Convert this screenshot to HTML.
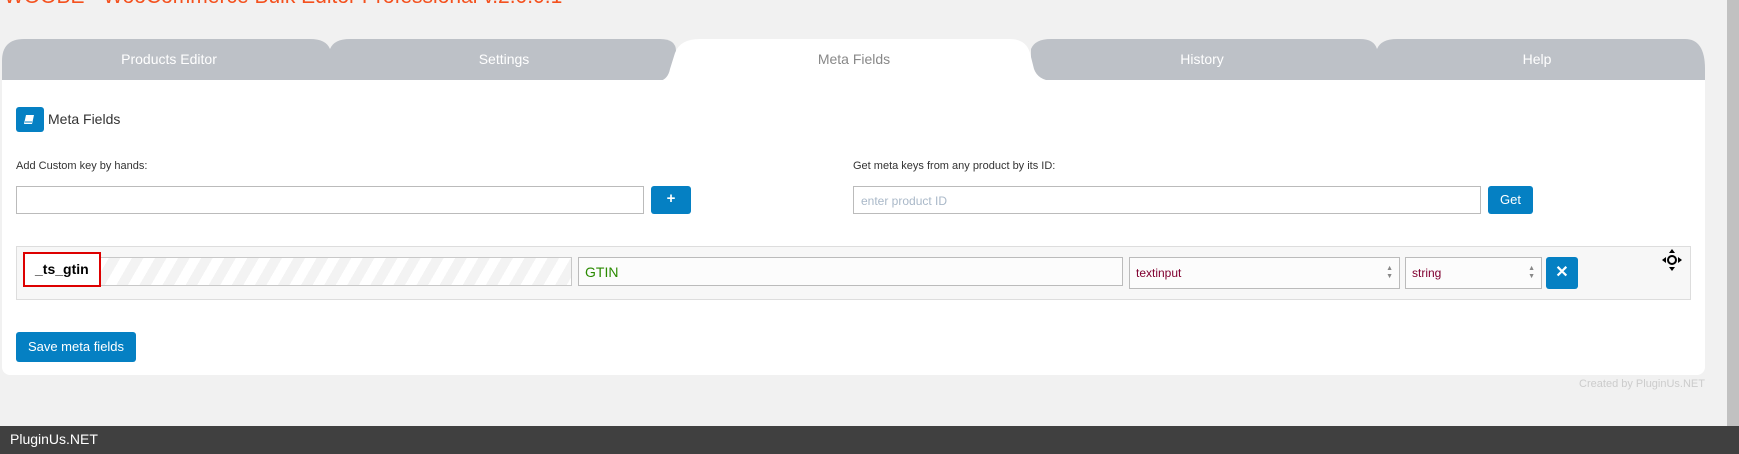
<!DOCTYPE html>
<html><head><meta charset="utf-8"><style>
*{margin:0;padding:0;box-sizing:border-box}
body{width:1739px;height:454px;background:#f1f1f1;font-family:"Liberation Sans",sans-serif;position:relative;overflow:hidden}
.a{position:absolute}
.title{left:4px;top:-15px;font-size:21px;color:#f4511e;white-space:nowrap}
.tt{font-size:14px;color:#fff;top:51px;transform:translateX(-50%);white-space:nowrap}
.panel{left:2px;top:80px;width:1703px;height:295px;background:#fff;border-radius:0 0 8px 8px}
.lbl{font-size:11px;color:#333}
.inp{background:#fff;border:1px solid #bbb}
.btn{background:#0580c3;border-radius:3px;color:#fff;text-align:center}
</style></head><body>
<div class="a title">WOOBE - WooCommerce Bulk Editor Professional v.2.0.0.1</div>
<svg class="a" style="left:0;top:39px" width="1739" height="42">
<path d="M2 41 V22 Q2 0 24 0 H310 Q326 0 330 10 V41Z" fill="#bdc1c7"/>
<path d="M330 41 V10 Q334 0 350 0 H660 Q676 0 676 12 V41Z" fill="#bdc1c7"/>
<path d="M1031 41 V10 Q1035 0 1051 0 H1360 Q1374 0 1377 10 V41Z" fill="#bdc1c7"/>
<path d="M1377 41 V10 Q1381 0 1397 0 H1685 Q1705 0 1705 30 V41Z" fill="#bdc1c7"/>
<path d="M660 42 Q668 40 670 30 L675 14 Q680 0 700 0 H1010 Q1026 0 1030 14 L1034 30 Q1038 41 1052 42Z" fill="#fff"/>
</svg>
<div class="a tt" style="left:169px">Products Editor</div>
<div class="a tt" style="left:504px">Settings</div>
<div class="a tt" style="left:854px;color:#888">Meta Fields</div>
<div class="a tt" style="left:1202px">History</div>
<div class="a tt" style="left:1537px">Help</div>
<div class="a panel"></div>
<div class="a btn" style="left:16px;top:107px;width:28px;height:25px"><svg width="28" height="25"><path d="M10 8 H18 L16 17 H8Z" fill="#fff"/><path d="M9 15 H16" stroke="#0580c3" stroke-width="1"/></svg></div>
<div class="a" style="left:48px;top:111px;font-size:14px;color:#333">Meta Fields</div>
<div class="a lbl" style="left:16px;top:160px">Add Custom key by hands:</div>
<div class="a lbl" style="left:853px;top:160px">Get meta keys from any product by its ID:</div>
<div class="a inp" style="left:16px;top:186px;width:628px;height:28px"></div>
<div class="a btn" style="left:651px;top:186px;width:40px;height:28px;font-size:15px;font-weight:bold;line-height:26px">+</div>
<div class="a inp" style="left:853px;top:186px;width:628px;height:28px;font-size:12px;color:#a9b8c8;padding:7px 7px">enter product ID</div>
<div class="a btn" style="left:1488px;top:186px;width:45px;height:28px;font-size:13px;line-height:28px">Get</div>
<div class="a" style="left:16px;top:246px;width:1675px;height:54px;background:#f7f7f7;border:1px solid #ddd"></div>
<div class="a" style="left:27px;top:257px;width:545px;height:29px;border:1px solid #c8c8c8;background:repeating-linear-gradient(120deg,#fff 0 10px,#f3f3f3 10px 20px)"></div>
<div class="a" style="left:23px;top:252px;width:78px;height:35px;border:2px solid #d00;background:#fff;font-size:14px;font-weight:bold;color:#000;padding:7px 0 0 10px">_ts_gtin</div>
<div class="a inp" style="left:578px;top:257px;width:545px;height:29px;background:#fcfcfc;font-size:14px;color:#2a8a00;padding:6px 6px">GTIN</div>
<div class="a inp" style="left:1129px;top:257px;width:271px;height:32px;background:#fcfcfc;font-size:12px;color:#800030;padding:8px 6px">textinput<span class="a" style="right:6px;top:7px;font-size:7px;color:#888;line-height:8px">▲<br>▼</span></div>
<div class="a inp" style="left:1405px;top:257px;width:137px;height:32px;background:#fcfcfc;font-size:12px;color:#800030;padding:8px 6px">string<span class="a" style="right:6px;top:7px;font-size:7px;color:#888;line-height:8px">▲<br>▼</span></div>
<div class="a btn" style="left:1546px;top:257px;width:32px;height:32px;font-size:16px;font-weight:bold;line-height:32px">✕</div>
<svg class="a" style="left:1661px;top:248px" width="22" height="24"><path d="M11 1 L14 5 H8Z M11 23 L14 19 H8Z M1 12 L5 9 V15Z M21 12 L17 9 V15Z" fill="#000"/><circle cx="11" cy="12" r="4" fill="none" stroke="#000" stroke-width="2"/></svg>
<div class="a btn" style="left:16px;top:332px;width:120px;height:30px;font-size:13px;line-height:30px">Save meta fields</div>
<div class="a" style="right:34px;top:378px;font-size:11px;color:#ccc">Created by PluginUs.NET</div>
<div class="a" style="left:1727px;top:0;width:12px;height:426px;background:#c1c1c1"></div>
<div class="a" style="left:0;top:426px;width:1739px;height:28px;background:#404040;color:#fff;font-size:14px;padding:5px 10px">PluginUs.NET</div>
</body></html>
